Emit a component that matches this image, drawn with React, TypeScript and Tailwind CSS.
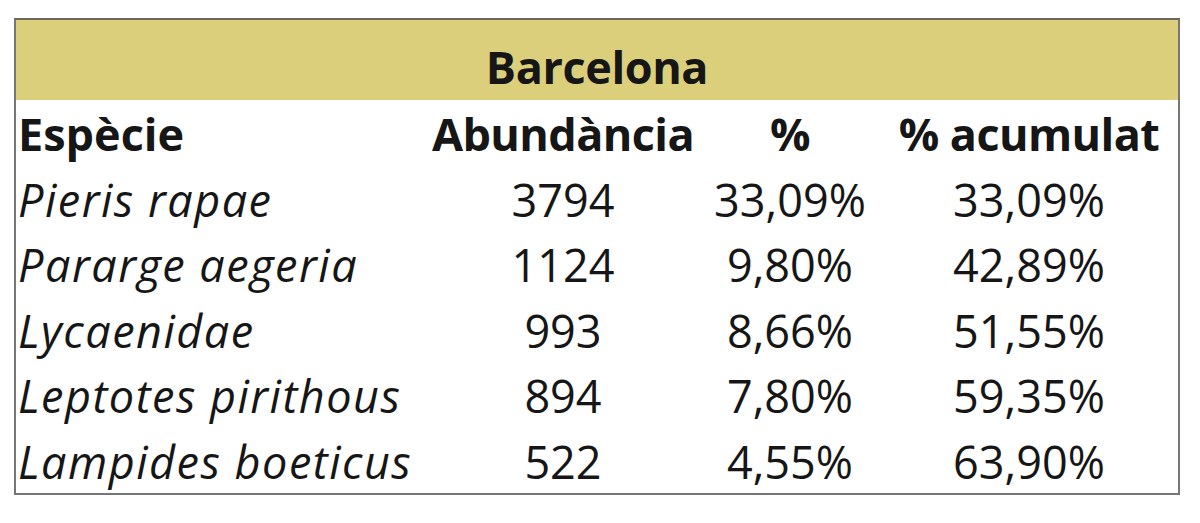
const rows = [
  { name: 'Pieris rapae', abundance: '3794', pct: '33,09%', cum: '33,09%' },
  { name: 'Pararge aegeria', abundance: '1124', pct: '9,80%', cum: '42,89%' },
  { name: 'Lycaenidae', abundance: '993', pct: '8,66%', cum: '51,55%' },
  { name: 'Leptotes pirithous', abundance: '894', pct: '7,80%', cum: '59,35%' },
  { name: 'Lampides boeticus', abundance: '522', pct: '4,55%', cum: '63,90%' },
];

const gridCols = 'grid grid-cols-[410px_274px_180px_1fr] h-[65.5px] items-center';

export default function App() {
  return (
    <div className="w-[1200px] h-[523px] bg-white pt-[18px] pl-[14px] font-['Open_Sans',sans-serif] text-[45px] text-[#161616]">
      <div className="w-[1166px] border-2 border-[#767676] border-t-[#6c695c]">
        {/* Title band */}
        <div className="h-[80px] bg-[#dccf7c] flex items-center justify-center pt-[14px] font-bold tracking-[-0.4px]">
          Barcelona
        </div>

        {/* Header row */}
        <div className={`${gridCols} font-bold tracking-[-0.6px]`}>
          <div className="pl-[2px] tracking-normal">Espècie</div>
          <div className="text-center">Abundància</div>
          <div className="text-center">%</div>
          <div className="text-center">% acumulat</div>
        </div>

        {rows.map((r) => (
          <div key={r.name} className={gridCols}>
            <div className="pl-[2px] italic tracking-[1.5px]">{r.name}</div>
            <div className="text-center">{r.abundance}</div>
            <div className="text-center">{r.pct}</div>
            <div className="text-center">{r.cum}</div>
          </div>
        ))}
      </div>
    </div>
  );
}
